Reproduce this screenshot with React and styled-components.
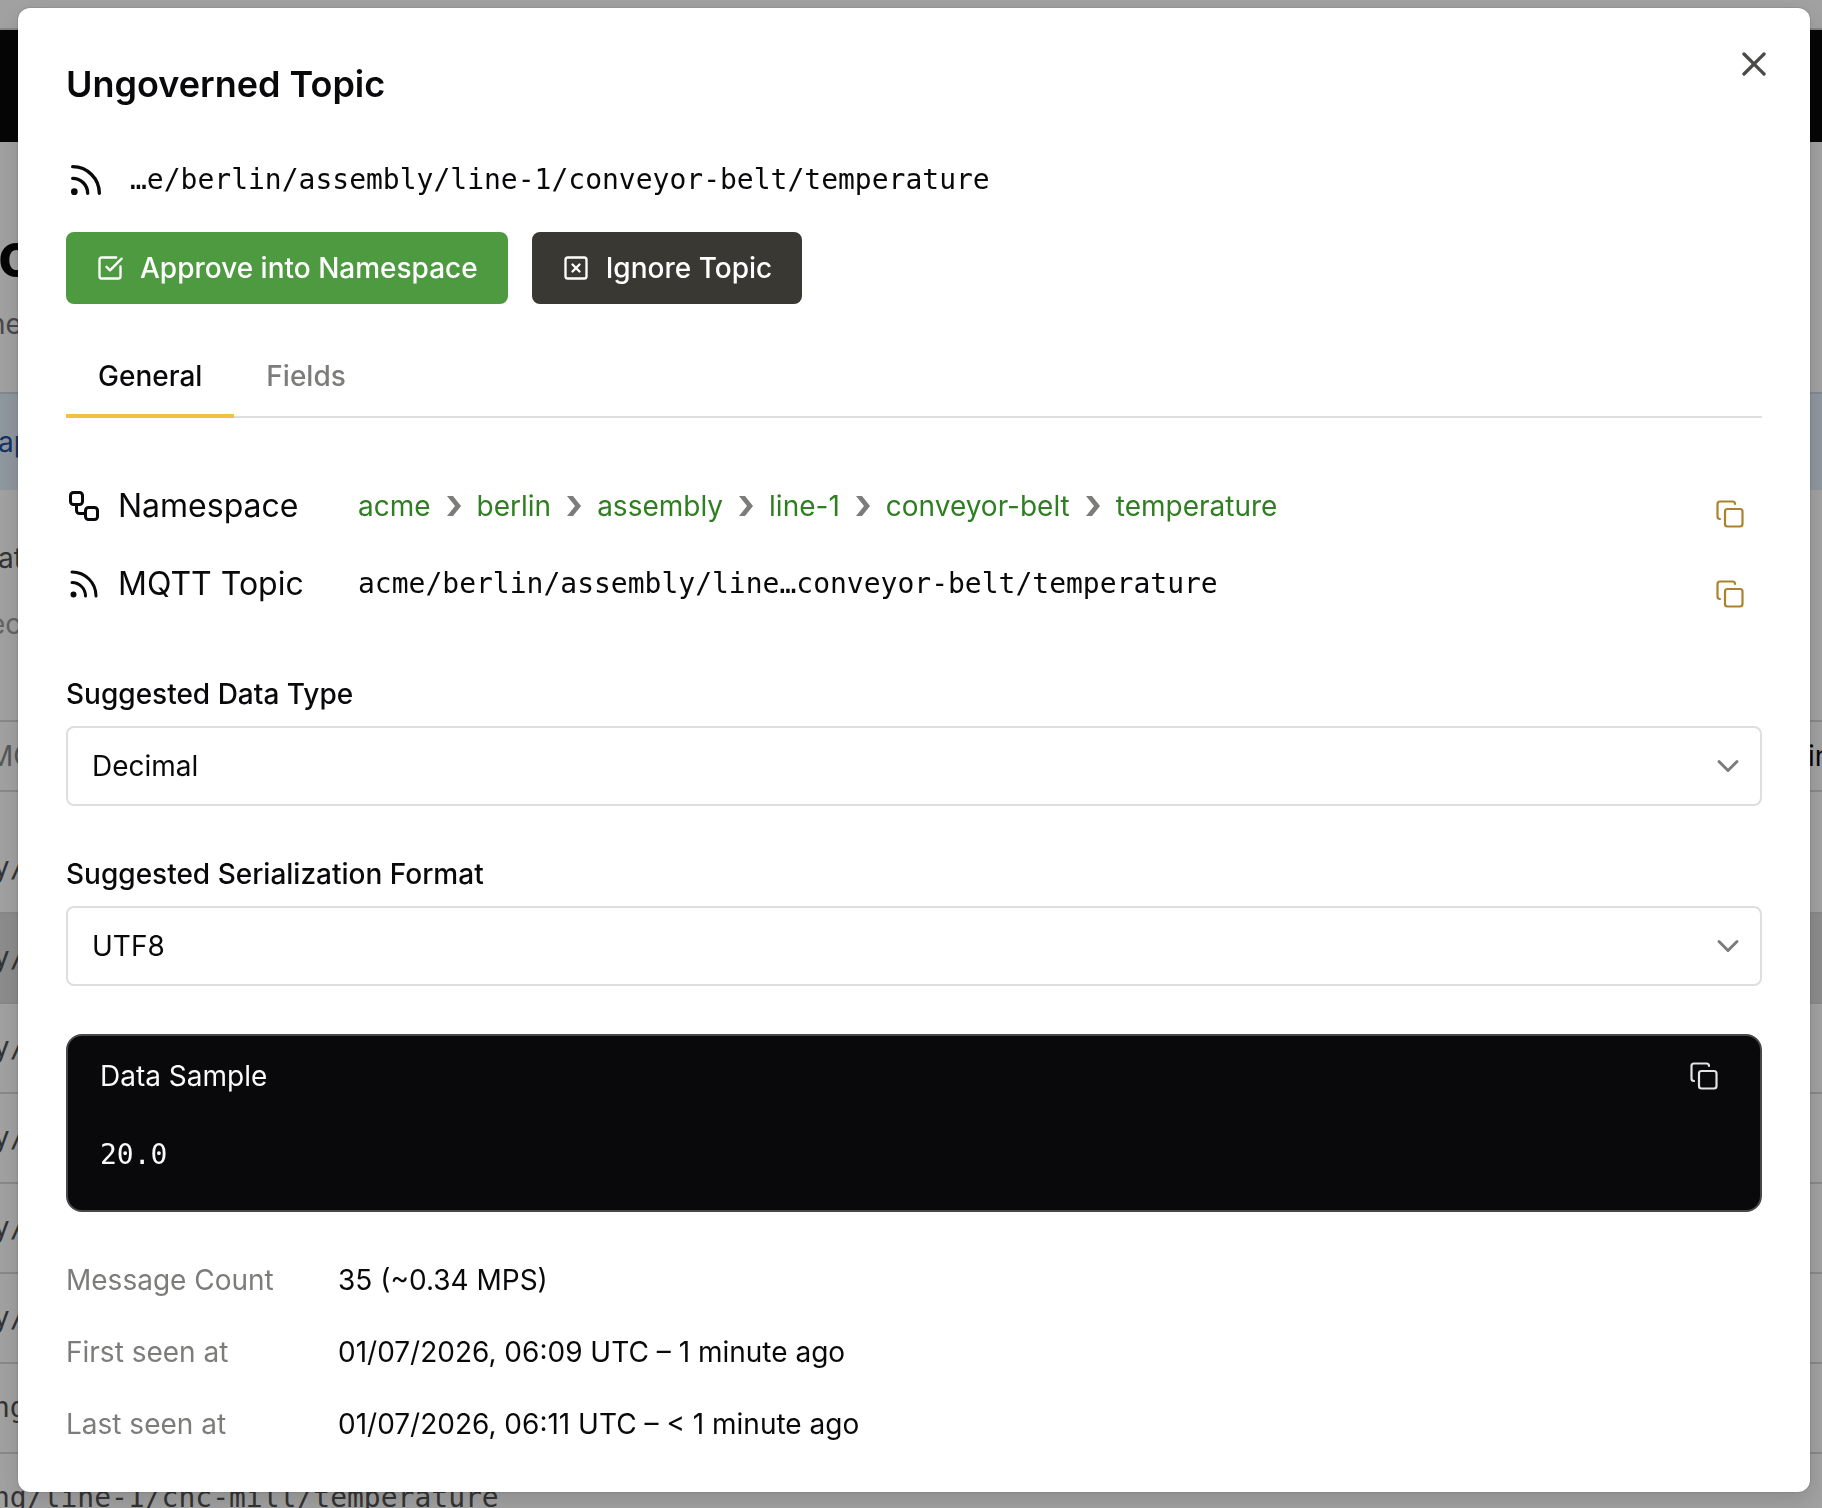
import React, { Fragment, useState } from 'react'
import styled, { createGlobalStyle } from 'styled-components'
import { ChevronDown, Copy, Rss, SquareCheckBig, SquareX, Workflow, X } from 'lucide-react'

const GlobalStyle = createGlobalStyle`
  * {
    box-sizing: border-box;
  }

  body {
    margin: 0;
    overflow: hidden;
    background: #fff;
    color: #09090b;
    font-family: Inter, 'Liberation Sans', sans-serif;
    font-size: 28px;
    line-height: 40px;
  }

  button, select {
    font: inherit;
    color: inherit;
  }
`

const mono = `'DejaVu Sans Mono', 'Liberation Mono', monospace`

/* page behind the dialog */

const Page = styled.div`
  height: 100vh;
  overflow: hidden;
  display: flex;
  flex-direction: column;
`

const BrowserBar = styled.div`
  flex: none;
  height: 30px;
  border-bottom: 2px solid #d4d4d4;
`

const NavBar = styled.nav`
  flex: none;
  height: 112px;
  background: #09090b;
`

const PageHead = styled.header`
  flex: none;
  height: 250px;
  padding-top: 84px;
`

const PageTitle = styled.h1`
  margin: 0 0 0 -2px;
  font-size: 60px;
  line-height: 56px;
  font-weight: 700;
`

const PageText = styled.p`
  margin: 0 0 0 ${props => props.$shift || 0}px;
  padding-top: ${props => props.$space || 0}px;
  color: ${props => props.$color || '#71717a'};
`

const Banner = styled.div`
  flex: none;
  height: 98px;
  padding-top: 28px;
  border-top: 2px solid #d0d8e4;
  background: #e3effc;
  color: #2351a0;

  span {
    margin-left: -2px;
  }
`

const Filters = styled.div`
  flex: none;
  height: 230px;
`

const TopicHead = styled.div`
  flex: none;
  display: flex;
  justify-content: space-between;
  height: 72px;
  margin-bottom: 32px;
  padding: 14px 0;
  border: solid #d8d8d8;
  border-width: 2px 0;
  color: #8a8a8a;

  span:first-child {
    margin-left: -12px;
  }

  span:last-child {
    width: 14px;
    color: #09090b;
  }
`

const TopicRow = styled.div`
  flex: none;
  height: 90px;
  padding: 24px 0;
  border-bottom: 2px solid #d8d8d8;
  background: ${props => props.$active ? '#dedede' : 'transparent'};
  color: #525252;
  font-family: ${mono};

  span {
    margin-left: -7px;
  }
`

/* dialog */

const Overlay = styled.div`
  position: fixed;
  inset: 0;
  display: flex;
  align-items: flex-start;
  padding: 8px 12px 16px 18px;
  background: rgba(0, 0, 0, 0.37);
`

const Dialog = styled.div`
  position: relative;
  flex: 1;
  min-width: 0;
  padding: 48px;
  border-radius: 12px;
  background: #fff;
  box-shadow: 0 8px 24px rgba(0, 0, 0, 0.14), 0 0 2px rgba(0, 0, 0, 0.3);
`

const Title = styled.h2`
  margin: 0 0 48px;
  font-size: 36px;
  line-height: 56px;
  font-weight: 600;
`

const IconButton = styled.button`
  display: flex;
  align-items: center;
  justify-content: center;
  width: 64px;
  height: 64px;
  padding: 0;
  border: 0;
  background: none;
  color: ${props => props.$color};
  cursor: pointer;
`

const CloseButton = styled(IconButton)`
  position: absolute;
  top: 24px;
  right: 24px;
`

const TopicLine = styled.div`
  display: flex;
  align-items: center;
  gap: 24px;
  margin-bottom: 32px;
`

const Mono = styled.span`
  font-family: ${mono};
`

const Actions = styled.div`
  display: flex;
  gap: 24px;
  margin-bottom: 36px;
`

const ActionButton = styled.button`
  display: flex;
  align-items: center;
  gap: 16px;
  height: 72px;
  padding: 0 30px;
  border: 0;
  border-radius: 8px;
  background: ${props => props.$bg};
  color: #fff;
  font-weight: 500;
  cursor: pointer;
`

const Tabs = styled.div`
  display: flex;
  margin-bottom: 60px;
  box-shadow: inset 0 -2px #dedede;
`

const Tab = styled.button`
  height: 78px;
  padding: 0 32px 2px;
  border: 0;
  border-bottom: 4px solid ${props => props.$active ? '#f2c144' : 'transparent'};
  background: none;
  color: ${props => props.$active ? '#09090b' : '#7c7c7a'};
  font-weight: 500;
  cursor: pointer;
`

const Source = styled.div`
  display: flex;
  align-items: flex-start;
  justify-content: space-between;
  margin-bottom: 48px;
`

const SourceList = styled.dl`
  display: grid;
  grid-template-columns: 240px auto;
  column-gap: 52px;
  row-gap: 22px;
  margin: 0;
`

const SourceName = styled.dt`
  display: flex;
  align-items: center;
  gap: 16px;
  height: 56px;
  font-size: 32px;
`

const SourceValue = styled.dd`
  display: flex;
  align-items: center;
  margin: 0;
`

const Crumb = styled.a`
  color: #2f7f22;
  text-decoration: none;
`

const CrumbArrow = styled.svg`
  width: 14px;
  height: 20px;
  margin: 0 16px;
  fill: #7c7c7a;
`

const CopyColumn = styled.div`
  display: flex;
  flex-direction: column;
  gap: 16px;
  padding-top: 4px;
`

const Field = styled.div`
  display: flex;
  flex-direction: column;
  gap: 12px;
  margin-bottom: 48px;
`

const Label = styled.label`
  font-weight: 500;
`

const SelectBox = styled.div`
  position: relative;

  svg {
    position: absolute;
    top: 22px;
    right: 16px;
    pointer-events: none;
  }
`

const Select = styled.select`
  appearance: none;
  display: block;
  width: 100%;
  height: 80px;
  padding: 0 64px 0 24px;
  border: 2px solid #dedede;
  border-radius: 8px;
  background: #fff;
`

const Sample = styled.section`
  margin-bottom: 48px;
  padding: 8px 24px 35px 32px;
  border: 2px solid #484848;
  border-radius: 16px;
  background: #09090b;
  color: #fafafa;
`

const SampleHead = styled.div`
  display: flex;
  align-items: center;
  justify-content: space-between;
  margin-bottom: 27px;
`

const SampleBody = styled.pre`
  margin: 0;
  font-family: ${mono};
`

const Stats = styled.dl`
  display: grid;
  grid-template-columns: 240px auto;
  column-gap: 32px;
  row-gap: 32px;
  margin: 0;

  dt {
    color: #7c7c7a;
  }

  dd {
    margin: 0;
  }
`

const crumbs = ['acme', 'berlin', 'assembly', 'line-1', 'conveyor-belt', 'temperature']
const rows = ['y/', 'y/', 'y/', 'y/', 'y/', 'y/', 'ng/', 'ng/line-1/cnc-mill/temperature']
const stats = [
  ['Message Count', '35 (~0.34 MPS)'],
  ['First seen at', '01/07/2026, 06:09 UTC – 1 minute ago'],
  ['Last seen at', '01/07/2026, 06:11 UTC – < 1 minute ago'],
]

const SelectField = (props) => {
  return (
    <Field>
      <Label htmlFor={props.id}>{props.label}</Label>
      <SelectBox>
        <Select id={props.id} defaultValue={props.options[0]}>
          {props.options.map(option => <option key={option}>{option}</option>)}
        </Select>
        <ChevronDown size={36} color="#7c7c7a" />
      </SelectBox>
    </Field>
  )
}

const CopyButton = (props) => {
  return (
    <IconButton type="button" aria-label={props.label} $color={props.color}>
      <Copy size={30} strokeWidth={1.75} />
    </IconButton>
  )
}

const TopicsPage = () => {
  return (
    <Page aria-hidden="true">
      <BrowserBar />
      <NavBar />
      <PageHead>
        <PageTitle>c</PageTitle>
        <PageText $space={22} $shift={-11}>ne</PageText>
      </PageHead>
      <Banner><span>ap</span></Banner>
      <Filters>
        <PageText $space={48} $shift={-2} $color="#525252">at</PageText>
        <PageText $space={26} $shift={-11} $color="#a0a0a0">ec</PageText>
      </Filters>
      <TopicHead>
        <span>MQ</span>
        <span>in</span>
      </TopicHead>
      {rows.map((row, index) => (
        <TopicRow key={index} $active={index === 1}><span>{row}</span></TopicRow>
      ))}
    </Page>
  )
}

const App = () => {
  const [tab, setTab] = useState('General')

  return (
    <Fragment>
      <GlobalStyle />
      <TopicsPage />
      <Overlay>
        <Dialog role="dialog" aria-modal="true" aria-labelledby="dialog-title">
          <CloseButton type="button" aria-label="Close" $color="#4a4a48">
            <X size={40} />
          </CloseButton>
          <Title id="dialog-title">Ungoverned Topic</Title>
          <TopicLine>
            <Rss size={40} />
            <Mono>…e/berlin/assembly/line-1/conveyor-belt/temperature</Mono>
          </TopicLine>
          <Actions>
            <ActionButton type="button" $bg="#4e9a40">
              <SquareCheckBig size={28} />
              Approve into Namespace
            </ActionButton>
            <ActionButton type="button" $bg="#3a3833">
              <SquareX size={28} />
              Ignore Topic
            </ActionButton>
          </Actions>
          <Tabs role="tablist">
            {['General', 'Fields'].map(name => (
              <Tab key={name} type="button" role="tab" aria-selected={tab === name} $active={tab === name} onClick={() => setTab(name)}>
                {name}
              </Tab>
            ))}
          </Tabs>
          <Source>
            <SourceList>
              <SourceName><Workflow size={36} />Namespace</SourceName>
              <SourceValue>
                {crumbs.map((crumb, index) => (
                  <Fragment key={crumb}>
                    {index > 0 && (
                      <CrumbArrow viewBox="0 0 14 20" aria-hidden="true">
                        <path d="M0 0h6l8 10-8 10H0l8-10z" />
                      </CrumbArrow>
                    )}
                    <Crumb href="#">{crumb}</Crumb>
                  </Fragment>
                ))}
              </SourceValue>
              <SourceName><Rss size={36} />MQTT Topic</SourceName>
              <SourceValue>
                <Mono>acme/berlin/assembly/line…conveyor-belt/temperature</Mono>
              </SourceValue>
            </SourceList>
            <CopyColumn>
              <CopyButton label="Copy namespace" color="#a9832b" />
              <CopyButton label="Copy MQTT topic" color="#a9832b" />
            </CopyColumn>
          </Source>
          <SelectField id="data-type" label="Suggested Data Type" options={['Decimal', 'Integer', 'String']} />
          <SelectField id="format" label="Suggested Serialization Format" options={['UTF8', 'JSON']} />
          <Sample>
            <SampleHead>
              Data Sample
              <CopyButton label="Copy data sample" color="#e4e4e7" />
            </SampleHead>
            <SampleBody>20.0</SampleBody>
          </Sample>
          <Stats>
            {stats.map(([name, value]) => (
              <Fragment key={name}>
                <dt>{name}</dt>
                <dd>{value}</dd>
              </Fragment>
            ))}
          </Stats>
        </Dialog>
      </Overlay>
    </Fragment>
  )
}

export default App
